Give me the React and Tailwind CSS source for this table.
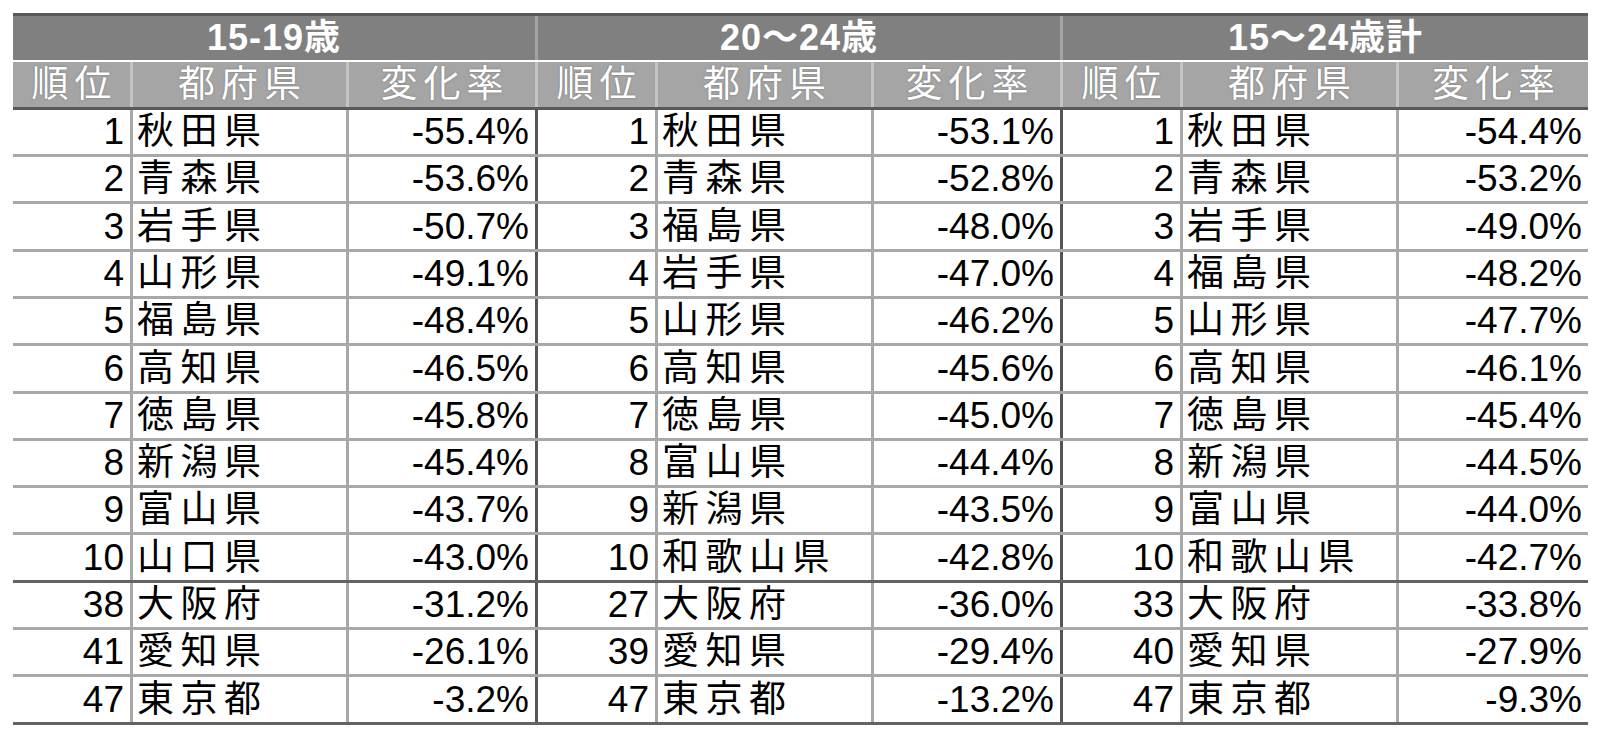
import React from 'react';

const groups = [
  {
    title: '15-19歳',
    rows: [
      ['1', '秋田県', '-55.4%'],
      ['2', '青森県', '-53.6%'],
      ['3', '岩手県', '-50.7%'],
      ['4', '山形県', '-49.1%'],
      ['5', '福島県', '-48.4%'],
      ['6', '高知県', '-46.5%'],
      ['7', '徳島県', '-45.8%'],
      ['8', '新潟県', '-45.4%'],
      ['9', '富山県', '-43.7%'],
      ['10', '山口県', '-43.0%'],
      ['38', '大阪府', '-31.2%'],
      ['41', '愛知県', '-26.1%'],
      ['47', '東京都', '-3.2%'],
    ],
  },
  {
    title: '20～24歳',
    rows: [
      ['1', '秋田県', '-53.1%'],
      ['2', '青森県', '-52.8%'],
      ['3', '福島県', '-48.0%'],
      ['4', '岩手県', '-47.0%'],
      ['5', '山形県', '-46.2%'],
      ['6', '高知県', '-45.6%'],
      ['7', '徳島県', '-45.0%'],
      ['8', '富山県', '-44.4%'],
      ['9', '新潟県', '-43.5%'],
      ['10', '和歌山県', '-42.8%'],
      ['27', '大阪府', '-36.0%'],
      ['39', '愛知県', '-29.4%'],
      ['47', '東京都', '-13.2%'],
    ],
  },
  {
    title: '15～24歳計',
    rows: [
      ['1', '秋田県', '-54.4%'],
      ['2', '青森県', '-53.2%'],
      ['3', '岩手県', '-49.0%'],
      ['4', '福島県', '-48.2%'],
      ['5', '山形県', '-47.7%'],
      ['6', '高知県', '-46.1%'],
      ['7', '徳島県', '-45.4%'],
      ['8', '新潟県', '-44.5%'],
      ['9', '富山県', '-44.0%'],
      ['10', '和歌山県', '-42.7%'],
      ['33', '大阪府', '-33.8%'],
      ['40', '愛知県', '-27.9%'],
      ['47', '東京都', '-9.3%'],
    ],
  },
];

const font = "font-['Liberation_Sans','Noto_Sans_CJK_JP',sans-serif]";

// rows that get one extra pixel so the 13 rows fill the sheet like the original
const tallRows = [2, 5, 9, 12];

const App = () => {
  const rowCount = groups[0].rows.length;

  return (
    <div className={`min-h-screen bg-white pl-[13px] pt-[13px] ${font}`}>
      <div className="w-[1575px] border-t-[3px] border-[#595959]">
        {/* age group titles */}
        <div className="flex h-[46px] border-b-2 border-white bg-[#808080]">
          {groups.map((g, i) => (
            <div
              key={g.title}
              className={
                i < 2
                  ? 'flex w-[525px] items-center justify-center border-r-[3px] border-[#a3a3a3] text-[36px] font-bold tracking-[1px] text-white'
                  : 'flex w-[525px] items-center justify-center text-[36px] font-bold tracking-[1px] text-white'
              }
            >
              {g.title}
            </div>
          ))}
        </div>

        {/* column headings */}
        <div className="flex h-[48px] border-b-[3px] border-[#595959] bg-[#a5a5a5] text-[37px] tracking-[6px] text-white [text-shadow:0_0_2px_#6f6f6f]">
          {groups.map((g, i) => (
            <div key={g.title} className="flex">
              <div className="flex w-[120px] items-center justify-center border-r-[3px] border-[#c4c4c4] pl-[6px]">順位</div>
              <div className="flex w-[216px] items-center justify-center border-r-[3px] border-[#c4c4c4] pl-[6px]">都府県</div>
              <div
                className={
                  i < 2
                    ? 'flex w-[189px] items-center justify-center border-r-[3px] border-[#c4c4c4] pl-[6px]'
                    : 'flex w-[189px] items-center justify-center pl-[6px]'
                }
              >
                変化率
              </div>
            </div>
          ))}
        </div>

        {/* ranking rows */}
        {Array.from({ length: rowCount }).map((_, r) => {
          const thick = r === 9 || r === rowCount - 1;
          const tall = tallRows.includes(r);
          let cls = 'flex h-[47px] border-b-[3px] border-[#a8a8a8] text-[37px] text-black';
          if (thick) cls = 'flex h-[48px] border-b-[3px] border-[#636363] text-[37px] text-black';
          else if (tall) cls = 'flex h-[48px] border-b-[3px] border-[#a8a8a8] text-[37px] text-black';
          return (
            <div key={r} className={cls}>
              {groups.map((g, i) => {
                const [rank, pref, rate] = g.rows[r];
                return (
                  <div key={g.title} className="flex">
                    <div className="flex w-[120px] items-center justify-end border-r-[3px] border-[#a8a8a8] pr-[6px]">
                      {rank}
                    </div>
                    <div className="flex w-[216px] items-center border-r-[3px] border-[#a8a8a8] pl-[4px] tracking-[6.5px]">
                      {pref}
                    </div>
                    <div
                      className={
                        i < 2
                          ? 'flex w-[189px] items-center justify-end border-r-[3px] border-[#555555] pr-[6px]'
                          : 'flex w-[189px] items-center justify-end pr-[6px]'
                      }
                    >
                      {rate}
                    </div>
                  </div>
                );
              })}
            </div>
          );
        })}
      </div>
    </div>
  );
};

export default App;
